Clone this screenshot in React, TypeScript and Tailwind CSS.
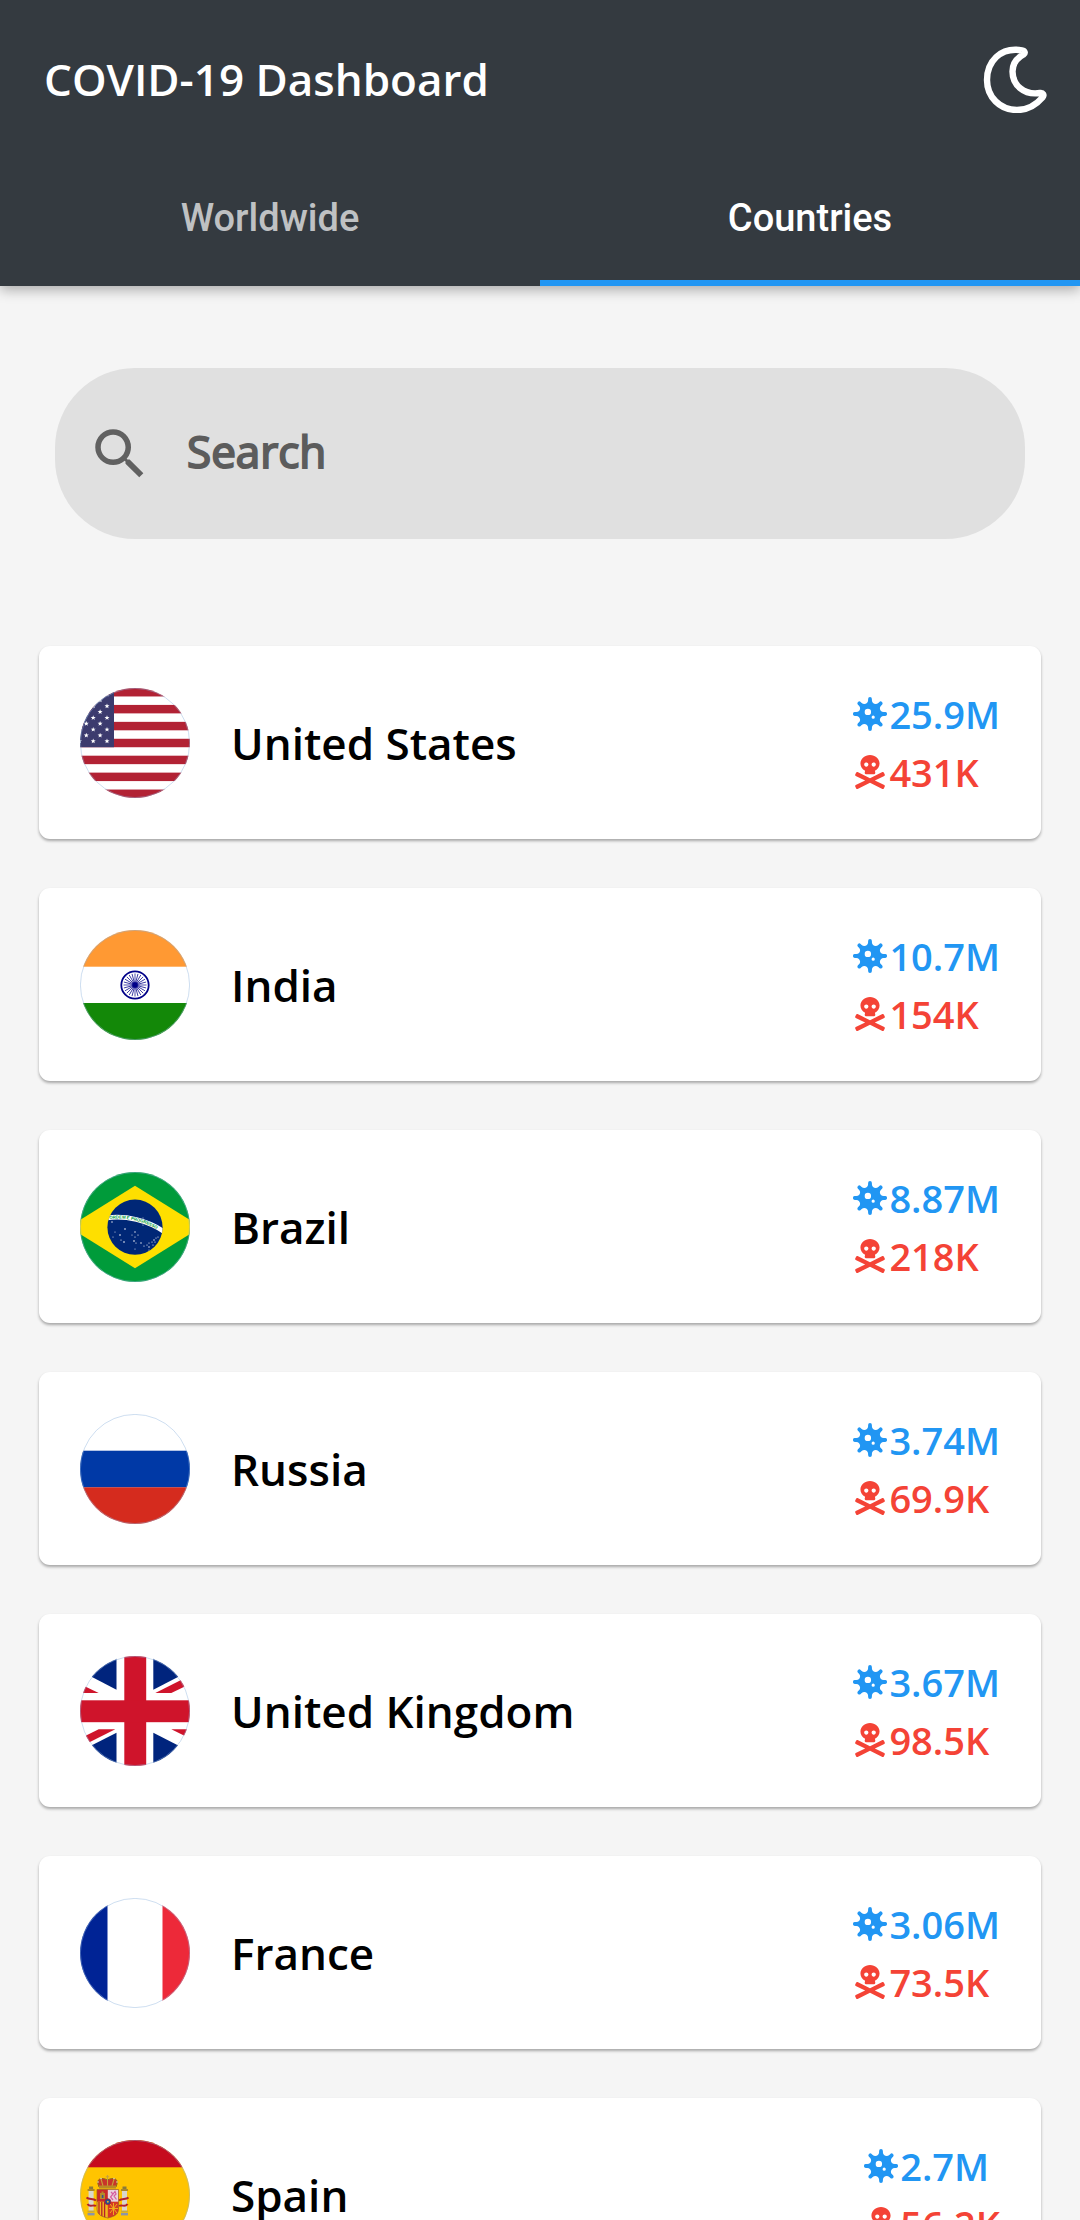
import { useState } from "react";
import type { ReactNode } from "react";
import { FaSkullCrossbones, FaVirus } from "react-icons/fa";
import { MdSearch } from "react-icons/md";

const STAR = "0,-2.6 0.65,-0.85 2.5,-0.8 1.05,0.35 1.55,2.1 0,1.05 -1.55,2.1 -1.05,0.35 -2.5,-0.8 -0.65,-0.85";

function Flag({ code, name, children }: { code: string; name: string; children: ReactNode }) {
  return (
    <svg viewBox="0 0 110 110" role="img" aria-label={`Flag of ${name}`} className="size-[110px] shrink-0">
      <clipPath id={`clip-${code}`}>
        <circle cx="55" cy="55" r="55" />
      </clipPath>
      <g clipPath={`url(#clip-${code})`}>{children}</g>
      <circle cx="55" cy="55" r="54.6" fill="none" stroke="#8fb4dc" strokeOpacity="0.55" strokeWidth="0.8" />
    </svg>
  );
}

function UnitedStates() {
  const stars: ReactNode[] = [];
  for (let row = 0; row < 9; row++) {
    for (let col = 0; col < 5; col++) {
      if ((row + col) % 2 === 0) {
        stars.push(
          <polygon key={`${row}-${col}`} points={STAR} transform={`translate(${27 - col * 6.9} ${53.2 - row * 5.85})`} />,
        );
      }
    }
  }
  return (
    <>
      <rect width="110" height="110" fill="#fff" />
      {[0, 2, 4, 6, 8, 10, 12].map((i) => (
        <rect key={i} y={(i * 110) / 13} width="110" height={110 / 13} fill="#b22234" />
      ))}
      <rect width="34" height={(7 * 110) / 13} fill="#3c3b6e" />
      <g fill="#fff">{stars}</g>
    </>
  );
}

function India() {
  return (
    <>
      <rect width="110" height="110" fill="#fff" />
      <rect width="110" height="36.7" fill="#ff9933" />
      <rect y="73" width="110" height="37" fill="#138808" />
      <circle cx="55" cy="55" r="13.7" fill="none" stroke="#000088" strokeWidth="1.8" />
      <g stroke="#000088" strokeWidth="0.7">
        {Array.from({ length: 24 }, (_, i) => (
          <line key={i} x1="55" y1="55" x2="55" y2="43.5" transform={`rotate(${i * 15} 55 55)`} />
        ))}
      </g>
      <circle cx="55" cy="55" r="2.7" fill="#000088" />
    </>
  );
}

const BRAZIL_STARS = [
  [32, 50, 0.7], [63, 46, 0.5], [63, 53, 0.5], [45, 57, 0.8], [35, 60, 0.5], [40, 63, 0.8], [33, 65, 0.5],
  [41, 68, 0.6], [44, 70, 0.8], [55, 60, 0.7], [52, 63, 0.5], [58, 63, 0.6], [55, 65, 0.6], [54, 69, 0.8],
  [56, 71, 0.6], [55, 77, 0.5], [61, 71, 0.7], [64, 74, 0.6], [67, 73, 0.6], [69, 75, 0.7], [69, 71, 0.6],
  [72, 70, 0.6], [74, 68, 0.7], [76, 66, 0.6], [78, 65, 0.6], [73, 73, 0.6], [75, 70, 0.6], [69, 78, 0.5],
];

function Brazil() {
  return (
    <>
      <rect width="110" height="110" fill="#009b3a" />
      <polygon points="55,13.7 121,55 55,96.3 -11,55" fill="#fedf00" />
      <clipPath id="brazil-globe">
        <circle cx="55" cy="55.2" r="27.6" />
      </clipPath>
      <g clipPath="url(#brazil-globe)">
        <rect x="26" y="26" width="60" height="60" fill="#002776" />
        <path d="M26 46 C45 43 68 48 86 61" fill="none" stroke="#fff" strokeWidth="4.6" />
        <path id="brazil-band" d="M29.5 47 C46 44.8 66 49.5 83 60.8" fill="none" />
        <text fill="#009b3a" fontSize="4.3" fontWeight="700" fontFamily="Liberation Sans, sans-serif">
          <textPath href="#brazil-band">ORDEM E PROGRESSO</textPath>
        </text>
        <g fill="#fff">
          {BRAZIL_STARS.map(([x, y, r]) => (
            <circle key={`${x}-${y}`} cx={x} cy={y} r={r} />
          ))}
        </g>
      </g>
    </>
  );
}

function Russia() {
  return (
    <>
      <rect width="110" height="37" fill="#fff" />
      <rect y="36.7" width="110" height="36.7" fill="#0039a6" />
      <rect y="73.3" width="110" height="36.7" fill="#d52b1e" />
    </>
  );
}

function UnitedKingdom() {
  return (
    <>
      <rect width="110" height="110" fill="#fff" />
      <g fill="#00247d">
        <polygon points="36.5,0 36.5,33.7 -11,9 -11,0" />
        <polygon points="73.3,0 73.3,33.7 121,9 121,0" />
        <polygon points="36.5,110 36.5,76.7 -11,101 -11,110" />
        <polygon points="73.3,110 73.3,76.7 121,101 121,110" />
      </g>
      <g fill="#cf142b">
        <polygon points="18.7,37 0,28 0,37" />
        <polygon points="75.3,37 110,19.5 110,28 91.3,37" />
        <polygon points="18.7,73.3 35.3,73.3 0,91 0,82.5" />
        <polygon points="91.3,73.3 110,73.3 110,82.5" />
        <rect x="44.3" width="21.9" height="110" />
        <rect y="44.3" width="110" height="21.9" />
      </g>
    </>
  );
}

function France() {
  return (
    <>
      <rect width="110" height="110" fill="#fff" />
      <rect width="27.5" height="110" fill="#002395" />
      <rect x="82.5" width="27.5" height="110" fill="#ed2939" />
    </>
  );
}

function Spain() {
  return (
    <>
      <rect width="110" height="110" fill="#ffc400" />
      <rect width="110" height="27.3" fill="#c60b1e" />
      <rect y="82.7" width="110" height="27.3" fill="#c60b1e" />
      {/* Pillars of Hercules with their ribbons */}
      {[8.6, 42].map((x) => (
        <g key={x}>
          <rect x={x} y="50" width="5" height="22" fill="#d9d6cc" />
          <rect x={x - 1} y="49" width="7" height="2" fill="#a8862a" />
          <rect x={x + 0.5} y="46.5" width="4" height="2.5" fill="#8a7a3a" />
          <rect x={x - 1} y="70.5" width="7" height="2" fill="#c9a93a" />
          <rect x={x - 1} y="73" width="7" height="2.4" fill="#8b95a8" />
        </g>
      ))}
      <g fill="none" stroke="#b3212b" strokeWidth="2">
        <path d="M6.5 57.5 C9 60 13 58 16 60.5" />
        <path d="M7.5 64 C10 68 13 64 16 66" />
        <path d="M48.5 57.5 C46 60 42 58 39 60.5" />
        <path d="M47.5 64 C45 68 42 64 39 66" />
      </g>
      {/* Crown */}
      <path d="M19 47 C15 38 22 37 27.5 40 C33 37 40 38 36 47 Z" fill="#c8352a" stroke="#8f6b1c" strokeWidth="1" />
      <path d="M27.5 35 V46 M25.8 36.8 H29.2 M21 39 L23 46 M34 39 L32 46" stroke="#c8a13a" strokeWidth="1.1" fill="none" />
      <rect x="19" y="45.5" width="17" height="3" fill="#b98a25" />
      <g fill="#e9dfb4">
        <circle cx="18" cy="42" r="0.8" />
        <circle cx="21" cy="38.5" r="0.8" />
        <circle cx="34" cy="38.5" r="0.8" />
        <circle cx="37" cy="42" r="0.8" />
      </g>
      {/* Quartered shield */}
      <clipPath id="spain-shield">
        <path d="M17 49.5 H38.5 V69 C38.5 76 31 77 27.8 78 C24.5 77 17 76 17 69 Z" />
      </clipPath>
      <g clipPath="url(#spain-shield)">
        <rect x="17" y="49" width="11" height="13" fill="#c92a2a" />
        <rect x="27.8" y="49" width="11" height="13" fill="#e9d3dc" />
        <rect x="17" y="61.7" width="11" height="17" fill="#f0b81c" />
        <rect x="27.8" y="61.7" width="11" height="17" fill="#d63a24" />
        <path d="M19 62 V78 M21.8 62 V78 M24.6 62 V78" stroke="#b8202a" strokeWidth="1.3" />
        <path d="M20 59 V53 H21.5 V51.5 H23.5 V53 H25 V59 Z" fill="#b58b2a" />
        <rect x="21.8" y="55" width="1.6" height="3" fill="#36508f" />
        <path d="M31 52 L33 54 L35 51.5 L36 54 L34 56 L36.5 59.5 M33 54 L30.5 57 L33 60" fill="none" stroke="#d65fa0" strokeWidth="1.2" />
        <path d="M30 64 L37 73 M37 64 L30 73 M29 68.5 H38 M33.5 63 V75" stroke="#f0b81c" strokeWidth="0.9" />
      </g>
      <path d="M17 49.5 H38.5 V69 C38.5 76 31 77 27.8 78 C24.5 77 17 76 17 69 Z" fill="none" stroke="#9a5a2a" strokeWidth="0.7" />
      <circle cx="27.8" cy="61.7" r="3" fill="#1d4f96" stroke="#b8202a" strokeWidth="0.8" />
      <circle cx="27.8" cy="61.7" r="1" fill="#e0b32e" />
    </>
  );
}

const COUNTRIES = [
  { code: "us", name: "United States", cases: "25.9M", deaths: "431K", Art: UnitedStates },
  { code: "in", name: "India", cases: "10.7M", deaths: "154K", Art: India },
  { code: "br", name: "Brazil", cases: "8.87M", deaths: "218K", Art: Brazil },
  { code: "ru", name: "Russia", cases: "3.74M", deaths: "69.9K", Art: Russia },
  { code: "gb", name: "United Kingdom", cases: "3.67M", deaths: "98.5K", Art: UnitedKingdom },
  { code: "fr", name: "France", cases: "3.06M", deaths: "73.5K", Art: France },
  { code: "es", name: "Spain", cases: "2.7M", deaths: "56.2K", Art: Spain },
];

function MoonIcon() {
  return (
    <svg viewBox="0 0 68 68" className="size-[68px]" fill="none" stroke="currentColor" strokeWidth="6.4" strokeLinejoin="round" aria-hidden="true">
      <path d="M40 5.3 C18 1.5 5 17 5 35 C5 52 18 65 35 65 C46 65 54 60 60.5 52.5 C62.5 50 61 47.5 58 48 C42 50.5 30.5 40 30.5 26.500 C30.5 19 34 13.5 41.5 9.5 C43.5 8.2 43 5.8 40 5.3 Z" />
    </svg>
  );
}

const TABS = ["Worldwide", "Countries"];

export default function App() {
  const [tab, setTab] = useState("Countries");
  const [query, setQuery] = useState("");
  const shown = COUNTRIES.filter((c) => c.name.toLowerCase().includes(query.toLowerCase()));

  return (
    <div className="flex h-screen flex-col overflow-hidden bg-[#f5f5f5] font-['Open_Sans',sans-serif]">
      <header className="relative z-10 shrink-0 bg-[#343a40] text-white shadow-[0_4px_12px_rgba(0,0,0,0.3)]">
        <div className="flex h-[157px] items-center justify-between pr-[30px] pl-11">
          <h1 className="text-[44px] font-semibold">COVID-19 Dashboard</h1>
          <button type="button" aria-label="Toggle dark mode" className="cursor-pointer">
            <MoonIcon />
          </button>
        </div>
        <div role="tablist" className="grid grid-cols-2">
          {TABS.map((label) => (
            <button
              key={label}
              type="button"
              role="tab"
              aria-selected={tab === label}
              onClick={() => setTab(label)}
              className="h-[129px] cursor-pointer border-b-6 border-transparent font-[Roboto,sans-serif] text-[38px] font-medium text-white/70 aria-selected:border-[#2196f3] aria-selected:text-white"
            >
              {label}
            </button>
          ))}
        </div>
      </header>

      <main className="min-h-0 flex-1 overflow-y-auto pb-10 [scrollbar-width:none]">
        <label className="mx-[55px] mt-[82px] flex h-[171px] items-center gap-[34px] rounded-[80px] bg-[#e0e0e0] px-8 text-[#616161]">
          <MdSearch className="size-[66px] shrink-0" aria-hidden="true" />
          <input
            type="text"
            placeholder="Search"
            aria-label="Search"
            value={query}
            onChange={(e) => setQuery(e.target.value)}
            className="min-w-0 flex-1 bg-transparent pb-1.5 text-[44px] outline-none [-webkit-text-stroke:2px_#5c5c5c] placeholder:text-[#5c5c5c]"
          />
        </label>

        <ul className="mx-[39px] mt-[107px] flex flex-col gap-[49px]">
          {shown.map(({ code, name, cases, deaths, Art }) => (
            <li
              key={code}
              className="flex h-[193px] items-center rounded-[11px] bg-white px-[41px] shadow-[0_2px_3px_rgba(0,0,0,0.32)]"
            >
              <Flag code={code} name={name}>
                <Art />
              </Flag>
              <h2 className="ml-[41px] flex-1 text-[44px] font-semibold text-black">{name}</h2>
              <div className="flex flex-col text-[38px] leading-[58px] font-semibold">
                <p className="flex items-center gap-0.5 text-[#2196f3]">
                  <FaVirus className="size-[34px]" aria-label="Cases" />
                  {cases}
                </p>
                <p className="flex items-center gap-0.5 text-[#f44336]">
                  <FaSkullCrossbones className="size-[34px]" aria-label="Deaths" />
                  {deaths}
                </p>
              </div>
            </li>
          ))}
        </ul>
      </main>
    </div>
  );
}
